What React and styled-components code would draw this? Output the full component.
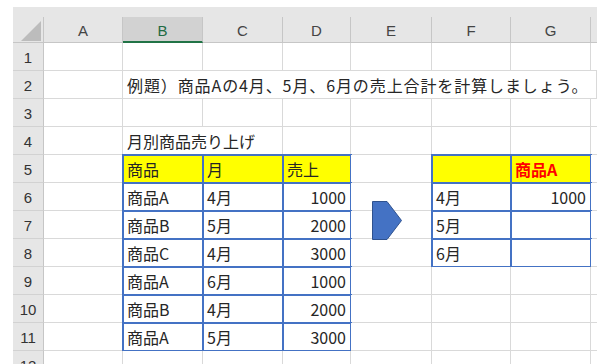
import React from 'react'
import styled, { createGlobalStyle } from 'styled-components'

const GlobalStyle = createGlobalStyle`
  body {
    margin: 0;
    background: #ffffff;
    font-family: "Noto Sans CJK JP", "Noto Sans", sans-serif;
    color: #222;
  }
`

const COLS = [
  { key: '', w: 31 },
  { key: 'A', w: 79 },
  { key: 'B', w: 80 },
  { key: 'C', w: 80 },
  { key: 'D', w: 68 },
  { key: 'E', w: 81 },
  { key: 'F', w: 79 },
  { key: 'G', w: 80 },
  { key: 'H', w: 6, hidden: true }
]

const ROWS = 12
const ACTIVE_COL = 'B'

// sheet contents, keyed by address
const CELLS = {
  B2: { text: '例題）商品Aの4月、5月、6月の売上合計を計算しましょう。', span: 7 },
  B4: { text: '月別商品売り上げ', span: 2 },
  B5: { text: '商品', fill: true, box: true },
  C5: { text: '月', fill: true, box: true },
  D5: { text: '売上', fill: true, box: true },
  F5: { text: '', fill: true, box: true },
  G5: { text: '商品A', fill: true, box: true, accent: true },
  F6: { text: '4月', box: true },
  G6: { text: '1000', box: true, num: true },
  F7: { text: '5月', box: true },
  G7: { text: '', box: true },
  F8: { text: '6月', box: true },
  G8: { text: '', box: true }
}

const sales = [
  ['商品A', '4月', 1000],
  ['商品B', '5月', 2000],
  ['商品C', '4月', 3000],
  ['商品A', '6月', 1000],
  ['商品B', '4月', 2000],
  ['商品A', '5月', 3000]
]
sales.forEach(([item, month, amount], i) => {
  const r = 6 + i
  CELLS['B' + r] = { text: item, box: true }
  CELLS['C' + r] = { text: month, box: true }
  CELLS['D' + r] = { text: String(amount), box: true, num: true }
})

const Frame = styled.div`
  padding: 7px 0 0 13px;
  width: 584px;
  height: 357px;
  overflow: hidden;
`

const TopBand = styled.div`
  height: 10px;
  background: #e6e6e6;
`

const Sheet = styled.div`
  position: relative;
  display: grid;
  grid-template-columns: ${COLS.map(c => c.w + 'px').join(' ')};
  grid-template-rows: 26px;
  grid-auto-rows: 28px;
`

const Corner = styled.div`
  background: #e6e6e6;
  border-right: 1px solid #c6c6c6;
  border-bottom: 1px solid #c6c6c6;
  display: flex;
  align-items: flex-end;
  justify-content: flex-end;
  padding: 0 2px 1px 0;
  &::after {
    content: '';
    width: 20px;
    height: 20px;
    background: #bcbcbc;
    clip-path: polygon(100% 0, 100% 100%, 0 100%);
  }
`

const ColHead = styled.div`
  background: ${p => (p.$active ? '#d2d2d2' : '#e6e6e6')};
  border-right: ${p => (p.$last ? 'none' : '1px solid #c6c6c6')};
  border-bottom: ${p => (p.$active ? '2px solid #217346' : '1px solid #c6c6c6')};
  color: ${p => (p.$active ? '#1f6b43' : '#444')};
  font-family: "Liberation Sans", "Noto Sans", sans-serif;
  font-size: 15px;
  display: flex;
  align-items: center;
  justify-content: center;
  padding-top: 2px;
`

const RowHead = styled.div`
  background: #e6e6e6;
  border-right: 1px solid #c6c6c6;
  border-bottom: 1px solid #d2d2d2;
  color: #333;
  font-family: "Liberation Sans", "Noto Sans", sans-serif;
  font-size: 15px;
  display: flex;
  align-items: center;
  justify-content: center;
  padding-top: 1px;
`

const Cell = styled.div`
  grid-column: span ${p => p.$span || 1};
  background: ${p => (p.$fill ? '#ffff00' : '#ffffff')};
  border-right: 1px solid #d9d9d9;
  border-bottom: 1px solid #d9d9d9;
  outline: ${p => (p.$box ? '2px solid #4472c4' : 'none')};
  outline-offset: -1px;
  display: flex;
  align-items: center;
  justify-content: ${p => (p.$num ? 'flex-end' : 'flex-start')};
  padding: 1px 4px 0 4px;
  font-size: 16px;
  font-weight: ${p => (p.$accent ? 700 : 400)};
  color: ${p => (p.$accent ? '#ff0000' : '#262626')};
  white-space: nowrap;
  overflow: visible;
  letter-spacing: ${p => (p.$spaced ? '0.9px' : '0')};
`

const Shape = styled.svg`
  position: absolute;
  left: 359px;
  top: 184px;
  width: 31px;
  height: 40px;
`

function ArrowShape () {
  return (
    <Shape viewBox='0 0 31 40'>
      <polygon
        points='0.5,0.5 15,0.5 29.5,19.5 15,38.5 0.5,38.5'
        fill='#4472c4'
        stroke='#2f528f'
        strokeWidth='1'
      />
    </Shape>
  )
}

function renderRow (r) {
  const out = [<RowHead key={'h' + r}>{r}</RowHead>]
  let skip = 0
  COLS.slice(1).forEach(col => {
    if (skip > 0) {
      skip--
      return
    }
    const addr = col.key + r
    const c = CELLS[addr]
    if (c && c.span) skip = c.span - 1
    out.push(
      <Cell
        key={addr}
        $span={c && c.span}
        $fill={c && c.fill}
        $box={c && c.box}
        $num={c && c.num}
        $accent={c && c.accent}
        $spaced={r === 2}
      >
        {c ? c.text : ''}
      </Cell>
    )
  })
  return out
}

export default function App () {
  const rows = []
  for (let r = 1; r <= ROWS; r++) rows.push(...renderRow(r))
  return (
    <>
      <GlobalStyle />
      <Frame>
        <TopBand />
        <Sheet>
          <Corner />
          {COLS.slice(1).map((c, i) => (
            <ColHead
              key={c.key}
              $active={c.key === ACTIVE_COL}
              $last={i === COLS.length - 2}
            >
              {c.hidden ? '' : c.key}
            </ColHead>
          ))}
          {rows}
          <ArrowShape />
        </Sheet>
      </Frame>
    </>
  )
}
